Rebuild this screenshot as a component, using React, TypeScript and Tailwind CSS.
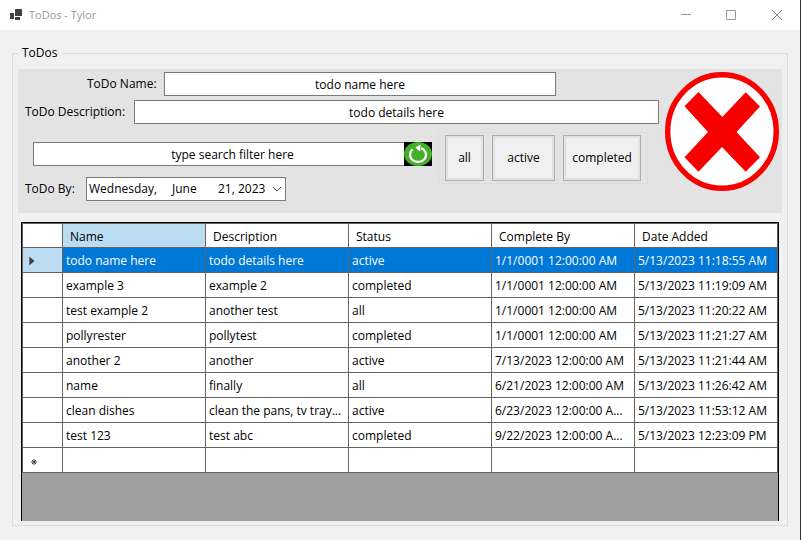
import React from "react";

const columns = ["Name", "Description", "Status", "Complete By", "Date Added"];

const rows = [
  ["todo name here", "todo details here", "active", "1/1/0001 12:00:00 AM", "5/13/2023 11:18:55 AM"],
  ["example 3", "example 2", "completed", "1/1/0001 12:00:00 AM", "5/13/2023 11:19:09 AM"],
  ["test example 2", "another test", "all", "1/1/0001 12:00:00 AM", "5/13/2023 11:20:22 AM"],
  ["pollyrester", "pollytest", "completed", "1/1/0001 12:00:00 AM", "5/13/2023 11:21:27 AM"],
  ["another 2", "another", "active", "7/13/2023 12:00:00 AM", "5/13/2023 11:21:44 AM"],
  ["name", "finally", "all", "6/21/2023 12:00:00 AM", "5/13/2023 11:26:42 AM"],
  ["clean dishes", "clean the pans, tv tray...", "active", "6/23/2023 12:00:00 A...", "5/13/2023 11:53:12 AM"],
  ["test 123", "test abc", "completed", "9/22/2023 12:00:00 A...", "5/13/2023 12:23:09 PM"],
];

const inputClass =
  "h-6 min-w-0 border border-[#7a7a7a] bg-white px-1 text-center text-black outline-none";
const filterClass =
  "h-[46px] border border-[#adadad] bg-[#f0f0f0] text-center shadow-[inset_0_0_0_2px_#e1e1e1]";

function TitleBar() {
  return (
    <header className="flex h-[30px] shrink-0 items-center bg-white pl-2.5 font-['Open_Sans',sans-serif] text-[11px] text-[#999999]">
      <svg width="12" height="12" viewBox="0 0 12 12" fill="#404040" aria-hidden="true">
        <path d="M5 0h7v7H5zM0 4h4v6H0zM5 8h5v3H5z" />
      </svg>
      <h1 className="ml-[7px] flex-1">ToDos - Tylor</h1>
      <button type="button" aria-label="Minimize" className="flex h-[30px] w-[45px] items-center justify-center">
        <svg width="10" height="10" viewBox="0 0 10 10" stroke="#999999" aria-hidden="true">
          <path d="M0 4.5h10" />
        </svg>
      </button>
      <button type="button" aria-label="Maximize" className="flex h-[30px] w-[46px] items-center justify-center">
        <svg width="10" height="10" viewBox="0 0 10 10" fill="none" stroke="#999999" aria-hidden="true">
          <path d="M.5 .5h9v9h-9z" />
        </svg>
      </button>
      <button type="button" aria-label="Close" className="flex h-[30px] w-[46px] items-center justify-center">
        <svg width="10" height="10" viewBox="0 0 10 10" stroke="#8a8a8a" aria-hidden="true">
          <path d="M0 0l10 10M10 0L0 10" />
        </svg>
      </button>
    </header>
  );
}

function RefreshIcon() {
  return (
    <svg width="28" height="24" viewBox="0 0 28 24" aria-hidden="true">
      <path d="M0 0h28v24H0z" fill="#000" />
      <ellipse cx="14" cy="12" rx="14" ry="12" fill="#43b02a" />
      <path d="M8.6 7.4A8 7.2 0 1 0 17 6" fill="none" stroke="#fff" strokeWidth="2.2" />
      <path d="M16.6 2.6L11.2 5.4L16 9.4z" fill="#fff" />
    </svg>
  );
}

function DeleteIcon() {
  return (
    <svg width="114" height="120" viewBox="0 0 114 120" aria-hidden="true">
      <ellipse cx="57" cy="59.5" rx="54.3" ry="56.8" fill="#fff" stroke="#f90000" strokeWidth="5.4" />
      <path
        d="M33.5 20L57.3 45L80.7 20.3L95 34.5L71.5 60L95 85.3L80.7 99.7L57 75L33.5 99.8L19.5 85.3L43 60L19.5 34.3z"
        fill="#f90000"
      />
    </svg>
  );
}

function TodoForm() {
  return (
    <div className="mx-[5px] mt-2 flex h-36 shrink-0 bg-[#e3e3e3] pt-[3px] pr-[3px] pl-[7px]">
      <div className="mr-1.5 min-w-0 flex-1">
        <div className="flex items-center pr-[103px] pl-[62px]">
          <label htmlFor="todo-name" className="w-[77px] shrink-0">ToDo Name:</label>
          <input id="todo-name" className={`${inputClass} flex-1`} defaultValue="todo name here" />
        </div>
        <div className="mt-1 flex items-center">
          <label htmlFor="todo-description" className="w-[109px] shrink-0">ToDo Description:</label>
          <input id="todo-description" className={`${inputClass} flex-1`} defaultValue="todo details here" />
        </div>
        <div className="mt-2 flex items-start gap-1.5 pr-[11px]">
          <div className="min-w-0 flex-1 pt-2.5">
            <div className="relative ml-2 flex">
              <input aria-label="Search filter" className={`${inputClass} flex-1`} defaultValue="type search filter here" />
              <button type="button" aria-label="Reset filter" className="absolute top-0 right-0">
                <RefreshIcon />
              </button>
            </div>
            <div className="mt-[11px] flex items-center">
              <label htmlFor="todo-by" className="w-[61px]">ToDo By:</label>
              <button
                id="todo-by"
                type="button"
                aria-haspopup="dialog"
                className="flex h-6 w-[200px] items-center border border-[#7a7a7a] bg-white pr-[3px] pl-0.5"
              >
                <span className="w-[83px] text-left">Wednesday,</span>
                <span className="w-[46px] text-left">June</span>
                <span className="flex-1 text-left">21, 2023</span>
                <svg width="10" height="6" viewBox="0 0 10 6" fill="none" stroke="#444" aria-hidden="true">
                  <path d="M1 1l4 4 4-4" />
                </svg>
              </button>
            </div>
          </div>
          <div className="flex h-[52px] gap-2 border border-[#dcdcdc] px-1.5 pt-0.5">
            <button type="button" className={`${filterClass} w-[39px]`}>all</button>
            <button type="button" className={`${filterClass} w-[63px]`}>active</button>
            <button type="button" className={`${filterClass} w-[78px]`}>completed</button>
          </div>
        </div>
      </div>
      <button type="button" aria-label="Delete todo" className="self-start">
        <DeleteIcon />
      </button>
    </div>
  );
}

function TodoTable() {
  return (
    <div className="mx-2 mt-[9px] mb-1 min-h-0 flex-1 overflow-hidden border-x border-t border-black bg-[#a0a0a0]">
      <table className="w-full table-fixed border-separate border-spacing-0 border-t border-l border-[#646464] bg-white text-left">
        <thead>
          <tr className="h-6">
            <th aria-label="Row" className="w-10 border-r border-b border-[#646464]" />
            {columns.map((column, i) => (
              <th
                key={column}
                scope="col"
                className={`border-r border-b border-[#646464] pt-0.5 pr-0 pb-0 pl-[7px] font-normal ${i === 0 ? "bg-[#bcdcf4]" : ""}`}
              >
                {column}
              </th>
            ))}
          </tr>
        </thead>
        <tbody>
          {rows.map((row, i) => (
            <tr key={row[4]} className={`h-[25px] ${i === 0 ? "bg-[#0078d7] text-white" : ""}`}>
              <td className={`border-r border-b border-[#646464] p-0 pt-0.5 pl-1.5 ${i === 0 ? "bg-[#bcdcf4]" : ""}`}>
                {i === 0 && (
                  <svg width="6" height="10" viewBox="0 0 6 10" aria-hidden="true">
                    <path d="M0 0l6 5-6 5z" fill="#404040" stroke="#fff" strokeWidth=".5" />
                  </svg>
                )}
              </td>
              {row.map((cell, j) => (
                <td key={j} className="overflow-hidden border-r border-b border-[#646464] pt-0.5 pr-0 pb-0 pl-[3px] whitespace-nowrap">
                  {cell}
                </td>
              ))}
            </tr>
          ))}
          <tr className="h-[25px]">
            <td className="border-r border-b border-[#646464] p-0 pt-1 pl-2">
              <svg width="6" height="6" viewBox="0 0 6 6" stroke="#404040" strokeWidth="1" aria-hidden="true">
                <path d="M3 0v6M0 3h6M1 1l4 4M5 1L1 5" />
              </svg>
            </td>
            {columns.map((column) => (
              <td key={column} className="border-r border-b border-[#646464]" />
            ))}
          </tr>
        </tbody>
      </table>
    </div>
  );
}

export default function App() {
  return (
    <div className="flex h-screen min-h-[520px] flex-col border-r border-[#333333] bg-[#f0f0f0] font-['Comic_Sans_MS','Open_Sans',sans-serif] text-xs leading-4 text-black">
      <TitleBar />
      <main className="flex min-h-0 flex-1 flex-col px-3 pt-[15px] pb-3.5">
        <fieldset className="flex min-h-0 flex-1 flex-col border border-[#dcdcdc]">
          <legend className="ml-1.5 pr-1.5 pl-[3px]">ToDos</legend>
          <TodoForm />
          <TodoTable />
        </fieldset>
      </main>
    </div>
  );
}
